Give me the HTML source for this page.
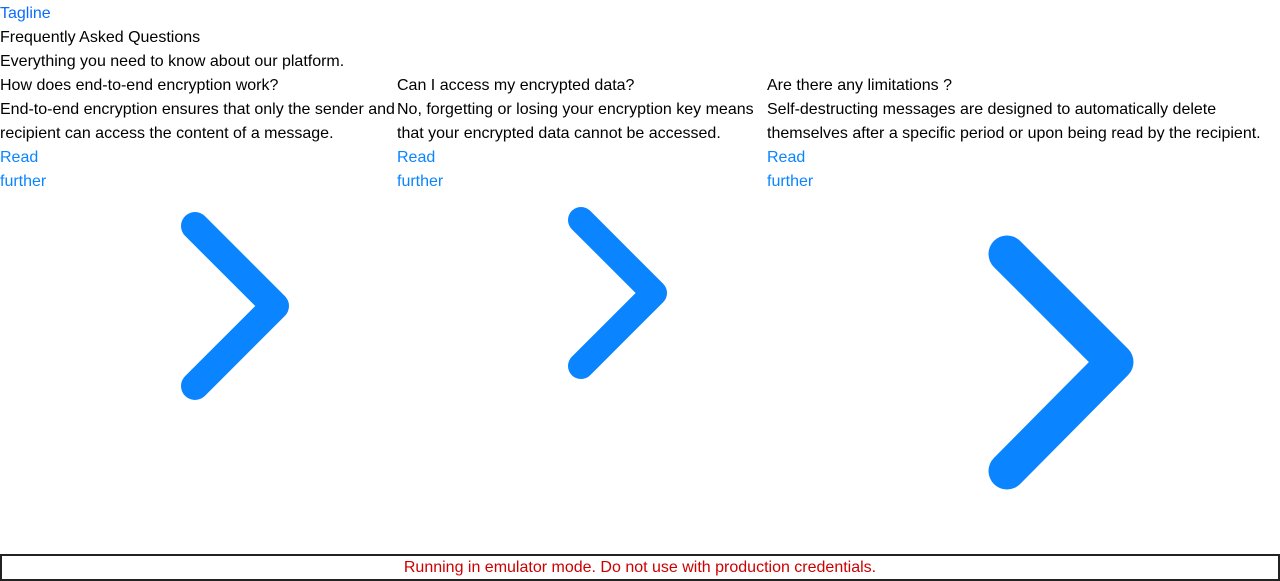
<!DOCTYPE html>
<html><head><meta charset="utf-8"><style>
html,body{margin:0;padding:0;background:#fff;}
body{width:1280px;height:581px;position:relative;overflow:hidden;font-family:"Liberation Sans",Arial,sans-serif;font-size:16px;line-height:24px;color:#000;}
.t{position:absolute;white-space:nowrap;}
.b{color:#0a84ff;}
.banner{position:absolute;left:0;top:554px;width:1276px;height:23px;border:2px solid #222;color:#c00;text-align:center;font-size:16px;line-height:24px;}
</style></head><body>
<div class="t" style="left:0;top:2px;color:#0a6cff">Tagline</div>
<div class="t" style="left:0;top:26px">Frequently Asked Questions</div>
<div class="t" style="left:0;top:50px">Everything you need to know about our platform.</div>

<div class="t" style="left:0;top:74px">How does end-to-end encryption work?</div>
<div class="t" style="left:0;top:98px">End-to-end encryption ensures that only the sender and</div>
<div class="t" style="left:0;top:122px">recipient can access the content of a message.</div>
<div class="t b" style="left:0;top:146px">Read</div>
<div class="t b" style="left:0;top:170px">further</div>

<div class="t" style="left:397px;top:74px">Can I access my encrypted data?</div>
<div class="t" style="left:397px;top:98px">No, forgetting or losing your encryption key means</div>
<div class="t" style="left:397px;top:122px">that your encrypted data cannot be accessed.</div>
<div class="t b" style="left:397px;top:146px">Read</div>
<div class="t b" style="left:397px;top:170px">further</div>

<div class="t" style="left:767px;top:74px">Are there any limitations ?</div>
<div class="t" style="left:767px;top:98px">Self-destructing messages are designed to automatically delete</div>
<div class="t" style="left:767px;top:122px">themselves after a specific period or upon being read by the recipient.</div>
<div class="t b" style="left:767px;top:146px">Read</div>
<div class="t b" style="left:767px;top:170px">further</div>

<svg width="1280" height="581" style="position:absolute;left:0;top:0" fill="none" stroke="#0a84ff" stroke-linecap="round" stroke-linejoin="round">
<path d="M195 226 L275 306 L195 386" stroke-width="28"/>
<path d="M581 220 L654 293 L581 366" stroke-width="26"/>
<path d="M1007 254 L1115 362 L1007 471" stroke-width="37"/>
</svg>

<div class="banner">Running in emulator mode. Do not use with production credentials.</div>
</body></html>
